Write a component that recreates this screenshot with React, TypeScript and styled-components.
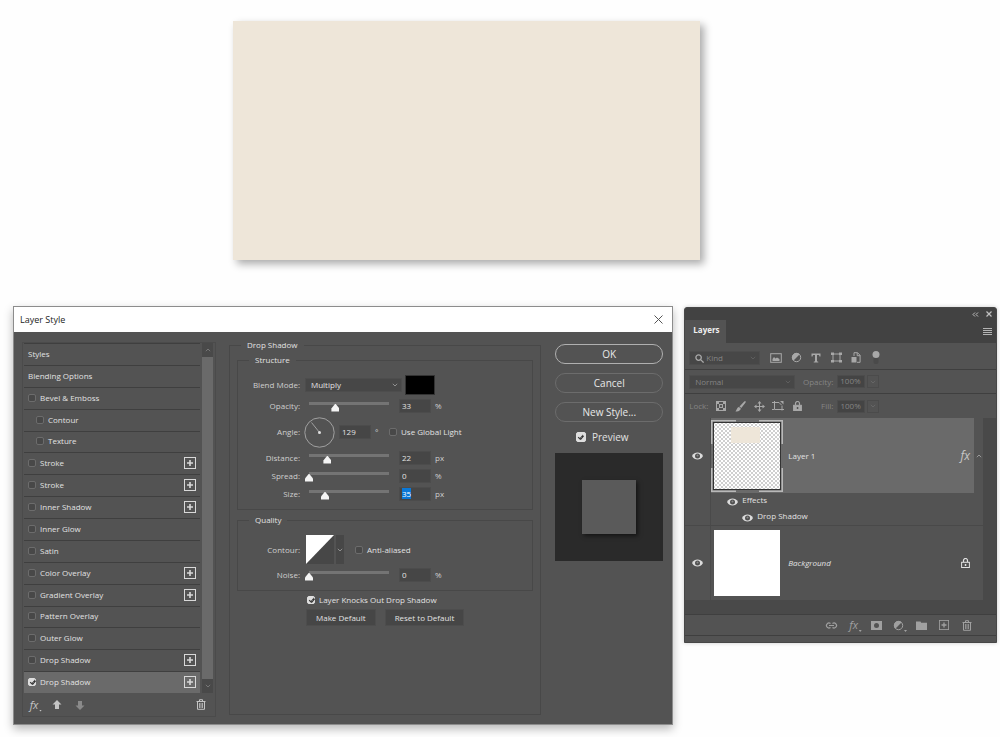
import React, { useEffect, useRef } from "react";
import styled, { createGlobalStyle, css } from "styled-components";

const GlobalStyle = createGlobalStyle`
  * { box-sizing: border-box; }
  body {
    margin: 0;
    background: #fefefe;
    font-family: "Open Sans", "Noto Sans", sans-serif;
    font-size: 8px;
    line-height: 12px;
    color: #e2e2e2;
  }
  button, input, select { font: inherit; color: inherit; margin: 0; padding: 0; }
  button { background: none; border: 0; }
  svg { display: block; flex: none; }
`;

/* ---------- page ---------- */

const Page = styled.main`
  display: flex;
  flex-direction: column;
  padding: 21px 3px 12px 13px;
`;

const Artwork = styled.div`
  width: 48%;
  max-width: 467px;
  height: 239px;
  margin-left: 220px;
  background: #eee6d9;
  box-shadow: 4px 4px 8px rgba(0, 0, 0, 0.33);
`;

const Workspace = styled.div`
  display: flex;
  align-items: flex-start;
  gap: 11px;
  margin-top: 46px;
`;

/* ---------- dialog ---------- */

const Dialog = styled.section`
  flex: 661 1 0;
  border: 1px solid #8c8c8c;
  background: #535353;
  box-shadow: 0 4px 9px rgba(0, 0, 0, 0.28);
`;

const TitleBar = styled.header`
  display: flex;
  align-items: center;
  justify-content: space-between;
  height: 25px;
  padding: 0 9px 0 6px;
  background: #fff;
  color: #1c1c1c;
`;

const Title = styled.h1`
  margin: 0;
  font-size: 9px;
  font-weight: 400;
`;

const CloseButton = styled.button`
  color: #555;
`;

const DialogBody = styled.div`
  display: flex;
  align-items: flex-start;
  padding: 7px 9px 7px 8px;
`;

const Sidebar = styled.div`
  width: 194px;
  margin: 3px 13px 0 0;
  border: 1px solid #4b4b4b;
`;

const ListArea = styled.div`
  display: flex;
  gap: 2px;
  height: 350px;
  padding: 0 2px 0 1px;
`;

const StyleList = styled.ul`
  flex: 1;
  display: flex;
  flex-direction: column;
  margin: 0;
  padding: 0;
  list-style: none;
`;

const StyleItem = styled.li<{ $selected?: boolean; $indent: number }>`
  flex: 1;
  display: flex;
  align-items: center;
  justify-content: space-between;
  min-height: 0;
  padding: 0 4px 1px ${(p) => p.$indent}px;
  border-top: 1px solid #3f3f3f;
  ${(p) => p.$selected && css`background: #6a6a6a;`}
`;

const ScrollBar = styled.div`
  display: flex;
  flex-direction: column;
  width: 11px;
  background: #494949;
`;

const ScrollButton = styled.button`
  display: grid;
  place-items: center;
  width: 11px;
  height: 14px;
  color: #777;
`;

const ScrollThumb = styled.div`
  flex: 1;
  background: #6a6a6a;
`;

const SidebarTools = styled.div`
  display: flex;
  align-items: center;
  gap: 9px;
  height: 23px;
  padding: 0 7px 0 4px;
  color: #c4c4c4;
`;

const ToolButton = styled.button<{ $dim?: boolean; $push?: boolean; $menu?: boolean }>`
  display: grid;
  place-items: center;
  position: relative;
  width: 14px;
  height: 14px;
  ${(p) => p.$dim && css`color: #8a8a8a;`}
  ${(p) => p.$push && css`margin-left: auto;`}
  ${(p) =>
    p.$menu &&
    css`
      &::after {
        content: "";
        position: absolute;
        right: -1px;
        bottom: 0;
        width: 3px;
        height: 2px;
        background: currentColor;
        clip-path: polygon(0 0, 100% 0, 50% 100%);
      }
    `}
`;

const PlusButton = styled.button`
  width: 12px;
  height: 12px;
  color: #d8d8d8;
`;

const CheckLabel = styled.label<{ $large?: boolean }>`
  display: flex;
  align-items: center;
  gap: ${(p) => (p.$large ? 6 : 4)}px;
  ${(p) => p.$large && css`font-size: 10px;`}
`;

const CheckBox = styled.input.attrs({ type: "checkbox" })<{ $large?: boolean }>`
  appearance: none;
  display: grid;
  place-items: center;
  flex: none;
  width: ${(p) => (p.$large ? 10 : 8)}px;
  height: ${(p) => (p.$large ? 10 : 8)}px;
  border: 1px solid #6c6c6c;
  border-radius: 2px;
  background: #484848;
  &:checked { background: #dedede; border-color: #dedede; }
  &:checked::before {
    content: "";
    box-sizing: content-box;
    width: 2px;
    height: 4px;
    margin-bottom: 1px;
    border: solid #333;
    border-width: 0 1px 1px 0;
    box-shadow: 1px 0 0 #333;
    rotate: 40deg;
  }
`;

const Group = styled.fieldset`
  min-width: 0;
  margin: 0;
  padding: 0;
  border: 1px solid #484848;
`;

const OuterGroup = styled(Group)`
  flex: 1;
  min-height: 376px;
  padding: 3px 7px 0;
`;

const InnerGroup = styled(Group)`
  display: block;
  & + & { margin-top: 4px; }
`;

const Legend = styled.legend<{ $outer?: boolean }>`
  margin-left: ${(p) => (p.$outer ? 4 : 11)}px;
  padding: 0 6px;
`;

const Rows = styled.div`
  display: flex;
  flex-direction: column;
  gap: 4px;
  padding: 9px 0 8px;
`;

const Row = styled.div<{ $height: number }>`
  display: flex;
  align-items: center;
  height: ${(p) => p.$height}px;
`;

const RowLabel = styled.label`
  width: 62px;
  margin-right: 5px;
  text-align: right;
  color: #cfcfcf;
`;

const SelectBox = styled.div<{ $width: number; $icon?: boolean }>`
  display: flex;
  align-items: center;
  position: relative;
  width: ${(p) => p.$width}px;
  height: 14px;
  background: #474747;
  border: 1px solid #4d4d4d;
  & > select {
    appearance: none;
    width: 100%;
    height: 12px;
    line-height: 12px;
    padding-left: ${(p) => (p.$icon ? 16 : 5)}px;
    border: 0;
    background: transparent;
  }
`;

const SelectChevron = styled.span<{ $dim?: boolean }>`
  position: absolute;
  right: 3px;
  top: 4px;
  color: ${(p) => (p.$dim ? "#5e5e5e" : "#909090")};
  pointer-events: none;
`;

const SelectGlyph = styled.span`
  position: absolute;
  left: 5px;
  top: 2px;
  color: #a8a8a8;
  pointer-events: none;
`;

const Swatch = styled.button`
  width: 30px;
  height: 20px;
  margin-left: 3px;
  background: #000;
  border: 1px solid #333;
`;

const Slider = styled.input.attrs({ type: "range" })`
  appearance: none;
  width: 88px;
  height: 14px;
  margin-right: 6px;
  background: transparent;
  &::-webkit-slider-runnable-track {
    height: 9px;
    background: linear-gradient(#747474, #747474) 4px 0 / calc(100% - 8px) 3px no-repeat;
  }
  &::-webkit-slider-thumb {
    appearance: none;
    width: 8px;
    height: 8px;
    margin-top: 2px;
    background: #f4f4f4;
    clip-path: polygon(50% 0, 100% 62%, 100% 100%, 0 100%, 0 62%);
  }
`;

const NumberField = styled.input.attrs({ type: "text" })`
  width: 32px;
  height: 14px;
  padding: 0 0 2px 2px;
  margin-right: 4px;
  border: 1px solid #4c4c4c;
  background: #464646;
  &:focus { outline: none; caret-color: transparent; }
  &::selection { background: #0a78d7; color: #fff; }
`;

const Unit = styled.span`
  color: #cfcfcf;
`;

const Dial = styled.div`
  margin: 0 4px 0 -1px;
`;

const Degree = styled.span`
  width: 14px;
  color: #cfcfcf;
`;

const ContourPicker = styled.div`
  display: flex;
  gap: 2px;
  margin: 0 11px 0 1px;
`;

const ContourButton = styled.button<{ $width: number }>`
  display: grid;
  place-items: center;
  width: ${(p) => p.$width}px;
  height: 29px;
  background: #474747;
  color: #909090;
`;

const Footer = styled.div`
  display: flex;
  flex-direction: column;
  gap: 3px;
  padding: 3px 0 0 70px;
`;

const ButtonRow = styled.div`
  display: flex;
  gap: 9px;
  margin-left: -1px;
`;

const SmallButton = styled.button`
  height: 17px;
  padding: 0 9px;
  background: #464646;
  border: 1px solid #4d4d4d;
`;

const Actions = styled.aside`
  display: flex;
  flex-direction: column;
  gap: 9px;
  width: 108px;
  margin: 5px 0 0 14px;
`;

const PillButton = styled.button<{ $primary?: boolean }>`
  height: 20px;
  border: 1px solid ${(p) => (p.$primary ? "#b0b0b0" : "#6c6c6c")};
  border-radius: 10px;
  font-size: 10px;
  color: #e8e8e8;
`;

const PreviewToggle = styled.div`
  display: flex;
  justify-content: center;
  padding: 0 14px 1px 0;
`;

const PreviewBox = styled.div`
  display: grid;
  place-items: center;
  height: 108px;
  background: #2a2a2a;
`;

const PreviewSquare = styled.div`
  width: 54px;
  height: 54px;
  background: #5a5a5a;
  box-shadow: 2px 2px 4px rgba(0, 0, 0, 0.5);
`;

/* ---------- layers panel ---------- */

const Panel = styled.section`
  flex: 312 1 0;
  margin-top: 1px;
  border: 1px solid #474747;
  border-radius: 3px 3px 0 0;
  background: #535353;
  box-shadow: 0 0 4px rgba(0, 0, 0, 0.2);
  overflow: hidden;
`;

const PanelTop = styled.div`
  display: flex;
  align-items: center;
  justify-content: flex-end;
  gap: 7px;
  height: 12px;
  padding-right: 4px;
  background: #424242;
  color: #c0c0c0;
`;

const TabBar = styled.div`
  display: flex;
  align-items: center;
  justify-content: space-between;
  height: 23px;
  padding-right: 4px;
  background: #424242;
  color: #b4b4b4;
`;

const Tab = styled.button`
  height: 23px;
  padding: 0 6px 3px 8px;
  background: #535353;
  font-weight: 700;
  color: #f0f0f0;
`;

const PanelRow = styled.div<{ $height: number; $line?: boolean; $top?: number }>`
  display: flex;
  align-items: center;
  height: ${(p) => p.$height}px;
  padding: ${(p) => p.$top ?? 0}px 4px 0;
  color: #858585;
  ${(p) => p.$line && css`border-bottom: 1px solid #3f3f3f;`}
`;

const IconSet = styled.div<{ $gap: number; $left: number }>`
  display: flex;
  align-items: center;
  gap: ${(p) => p.$gap}px;
  margin-left: ${(p) => p.$left}px;
  color: #a8a8a8;
`;

const IconButton = styled.button`
  display: grid;
  place-items: center;
  width: 12px;
  height: 14px;
`;

const PanelLabel = styled.label<{ $width: number }>`
  width: ${(p) => p.$width}px;
  text-align: right;
  margin-right: 4px;
`;

const PanelField = styled(NumberField)`
  width: 28px;
  height: 13px;
  margin-right: 2px;
  background: #444;
`;

const PanelDrop = styled.button`
  display: grid;
  place-items: center;
  width: 12px;
  height: 13px;
  border: 1px solid #4b4b4b;
  color: #666;
`;

const LayerArea = styled.div`
  display: flex;
  height: 196px;
  background: #494949;
`;

const Layers = styled.div`
  flex: 1;
  margin-right: 13px;
`;

const LayerRow = styled.div<{ $last?: boolean }>`
  display: flex;
  height: ${(p) => (p.$last ? 76 : 75)}px;
  background: #535353;
  ${(p) => p.$last && css`border: solid #494949; border-width: 1px 0;`}
`;

const EyeCell = styled.div`
  display: grid;
  place-items: center;
  width: 26px;
  border-right: 1px solid #4a4a4a;
  color: #d6d6d6;
`;

const LayerMain = styled.div<{ $active?: boolean }>`
  flex: 1;
  display: flex;
  align-items: center;
  gap: 5px;
  padding-right: 4px;
  ${(p) => p.$active && css`background: #6a6a6a;`}
`;

const Thumb = styled.div`
  width: 72px;
  height: 72px;
`;

const LayerName = styled.span<{ $italic?: boolean }>`
  flex: 1;
  font-style: ${(p) => (p.$italic ? "italic" : "normal")};
`;

const Collapse = styled.div`
  display: grid;
  place-items: center;
  width: 9px;
  color: #999;
`;

const EffectsBlock = styled.div`
  display: flex;
  height: 32px;
  background: #535353;
`;

const EffectsGutter = styled.div`
  width: 26px;
  border-right: 1px solid #4a4a4a;
`;

const EffectLine = styled.div<{ $indent: number }>`
  display: flex;
  align-items: center;
  gap: 4px;
  height: 16px;
  padding: 0 0 3px ${(p) => p.$indent}px;
  & > svg { margin-top: 4px; }
`;

const PanelTools = styled.div`
  display: flex;
  justify-content: flex-end;
  height: 22px;
  padding-right: 22px;
  border-top: 1px solid #3f3f3f;
  border-bottom: 1px solid #3f3f3f;
  color: #a0a0a0;
`;

const PanelToolSet = styled.div`
  display: flex;
  align-items: center;
  justify-content: space-between;
  width: 150px;
`;

const Grip = styled.div`
  height: 6px;
`;

const Fx = styled.span<{ $size: number }>`
  font-size: ${(p) => p.$size}px;
  font-style: italic;
  line-height: 12px;
  color: ${(p) => (p.$size > 11 ? "#c8c8c8" : "inherit")};
`;

/* ---------- icons ---------- */

const Chevron = ({ up = false }: { up?: boolean }) => (
  <svg width="6" height="4" viewBox="0 0 6 4" fill="none" stroke="currentColor">
    <path d={up ? "M.8 3.2 3 1l2.2 2.2" : "M.8.8 3 3 5.2.8"} />
  </svg>
);

const PlusIcon = ({ size = 12 }: { size?: number }) => (
  <svg width={size} height={size} viewBox="0 0 12 12" fill="none" stroke="currentColor">
    <rect x=".5" y=".5" width="11" height="11" />
    <path d="M6 3v6M3 6h6" strokeWidth="1.6" />
  </svg>
);

const TrashIcon = () => (
  <svg width="10" height="11" viewBox="0 0 10 11" fill="none" stroke="currentColor">
    <path d="M.5 2.500h9M3.500 2V.7h3V2M1.500 3v7.300h7V3" />
    <path d="M3.500 4v5M5 4v5M6.500 4v5" strokeWidth=".8" />
  </svg>
);

const ArrowIcon = ({ down = false }: { down?: boolean }) => (
  <svg width="10" height="10" viewBox="0 0 10 10" fill="currentColor">
    <path d={down ? "M5 10 .5 5.500H3V1h4v4.500h2.500z" : "M5 0 .5 4.500H3V9h4V4.500h2.500z"} />
  </svg>
);

const EyeIcon = () => (
  <svg width="11" height="8" viewBox="0 0 11 8">
    <path d="M0 4C1.500 1.400 3.300.5 5.500.5S9.500 1.400 11 4C9.500 6.600 7.700 7.500 5.500 7.500S1.500 6.600 0 4z" fill="#dcdcdc" />
    <circle cx="5.500" cy="4" r="2.500" fill="#505050" />
    <circle cx="5.500" cy="3.600" r="1" fill="#8a8a8a" />
  </svg>
);

const HalfCircle = () => (
  <svg width="11" height="11" viewBox="0 0 11 11">
    <circle cx="5.500" cy="5.500" r="4.200" fill="none" stroke="currentColor" />
    <path d="M2.300 8.700A4.500 4.500 0 0 1 8.700 2.300z" fill="currentColor" />
  </svg>
);

const ImageIcon = () => (
  <svg width="12" height="10" viewBox="0 0 12 10" fill="none" stroke="currentColor">
    <rect x=".7" y=".7" width="10.600" height="8.600" />
    <path d="M2.500 8V6l1.500-2 1.500 1.500L7 4.500 9.500 6v2z" fill="currentColor" stroke="none" />
  </svg>
);

const TypeIcon = () => (
  <svg width="10" height="10" viewBox="0 0 10 10" fill="currentColor">
    <path d="M.5.5h9v3h-1L8 2H6v6.300l1.300.4v.8H2.700v-.8L4 8.300V2H2l-.5 1.500h-1z" />
  </svg>
);

const ShapeIcon = () => (
  <svg width="11" height="11" viewBox="0 0 11 11" fill="none" stroke="currentColor">
    <path d="M2 2h7v7H2z" />
    <path d="M0 .5h3v2.500H0zM8 .5h3v2.500H8zM0 8h3v2.500H0zM8 8h3v2.500H8z" fill="currentColor" stroke="none" />
  </svg>
);

const SmartIcon = () => (
  <svg width="10" height="11" viewBox="0 0 10 11" fill="none" stroke="currentColor">
    <path d="M3 4V.7h3.500l2.600 2.600v7H6M6.200.7v3h3" />
    <rect x=".5" y="5" width="5" height="5.500" fill="currentColor" stroke="none" />
  </svg>
);

const ToggleIcon = () => (
  <svg width="8" height="14" viewBox="0 0 8 14">
    <rect x="1.500" y="2" width="5" height="11" rx="2" fill="#4a4a4a" />
    <circle cx="4" cy="3.500" r="3.500" fill="#a8a8a8" />
  </svg>
);

const SearchIcon = () => (
  <svg width="9" height="9" viewBox="0 0 9 9" fill="none" stroke="currentColor" strokeWidth="1.300">
    <circle cx="3.600" cy="3.600" r="2.700" />
    <path d="m5.600 5.600 3 3" />
  </svg>
);

const CheckerIcon = () => (
  <svg width="10" height="10" viewBox="0 0 10 10">
    <rect x=".5" y=".5" width="9" height="9" fill="none" stroke="currentColor" />
    <path d="M1 1h2v2H1zM7 1h2v2H7zM3 3h4v4H3zM1 7h2v2H1zM7 7h2v2H7z" fill="currentColor" />
    <path d="M4 4h2v2H4z" fill="#5a5a5a" />
  </svg>
);

const BrushIcon = () => (
  <svg width="11" height="11" viewBox="0 0 11 11" fill="currentColor">
    <path d="M10.500.3c.5.400.3 1-.1 1.500L6.300 7 4.500 5.500 9.200.6c.5-.4.9-.6 1.300-.3zM4 6l1.800 1.600C5.500 9.800 3 11 .3 10.300 2 9.500 1.500 6.600 4 6z" />
  </svg>
);

const MoveIcon = () => (
  <svg width="11" height="11" viewBox="0 0 11 11">
    <path d="M5.500 2v7M2 5.500h7" stroke="currentColor" fill="none" />
    <path d="M5.500 0 7.500 2.500h-4zM5.500 11l2-2.500h-4zM0 5.500l2.500-2v4zM11 5.500l-2.500-2v4z" fill="currentColor" />
  </svg>
);

const ArtboardIcon = () => (
  <svg width="12" height="10" viewBox="0 0 12 10" fill="none" stroke="currentColor">
    <path d="M0 1.500h7M2.500 0v8.500H12M10 9.500V5M0 8.500h2M7 1.500l3 3" />
    <path d="M8 0h3.500v3.500z" fill="currentColor" stroke="none" />
  </svg>
);

const LockIcon = ({ outline = false }: { outline?: boolean }) => (
  <svg width="9" height="10" viewBox="0 0 9 10" fill="none" stroke="currentColor">
    <path d="M2.500 4V2.500a2 2 0 0 1 4 0V4" strokeWidth="1.200" />
    <rect x=".6" y="4.300" width="7.800" height="5.200" fill={outline ? "none" : "currentColor"} />
    <rect x="3.800" y="6" width="1.500" height="2" fill={outline ? "currentColor" : "#535353"} stroke="none" />
  </svg>
);

const LinkIcon = () => (
  <svg width="13" height="7" viewBox="0 0 13 7" fill="none" stroke="currentColor" strokeWidth="1.200">
    <path d="M5.500 5.500A2.500 2.500 0 1 1 5.500 1.500M7.500 1.500a2.500 2.500 0 1 1 0 4M4 3.500h5" />
  </svg>
);

const MaskIcon = () => (
  <svg width="11" height="9" viewBox="0 0 11 9">
    <path fillRule="evenodd" d="M0 0h11v9H0zM5.500 2a2.500 2.500 0 1 0 0 5 2.500 2.500 0 0 0 0-5z" fill="currentColor" />
  </svg>
);

const FolderIcon = () => (
  <svg width="11" height="9" viewBox="0 0 11 9" fill="currentColor">
    <path d="M0 .5h4.500l.7 1.300H11V9H0z" />
  </svg>
);

const LayerThumb = ({ filled = false }: { filled?: boolean }) => (
  <svg width="72" height="72" viewBox="0 0 72 72">
    <defs>
      <pattern id="transparency" width="4" height="4" patternUnits="userSpaceOnUse">
        <rect width="4" height="4" fill="#fff" />
        <path d="M0 0h2v2H0zM2 2h2v2H2z" fill="#cfcfcf" />
      </pattern>
    </defs>
    {filled ? (
      <rect x="3" y="3" width="66" height="66" fill="#fff" />
    ) : (
      <>
        <path d="M.5 24V.5H25M48 .5h23.500V24M71.500 48v23.500H48M25 71.500H.5V48" fill="none" stroke="#b8b8b8" strokeWidth="2" />
        <rect x="2.500" y="2.500" width="67" height="67" fill="url(#transparency)" stroke="#333" />
        <rect x="20" y="7" width="29" height="16" fill="#eee6d9" />
      </>
    )}
  </svg>
);

/* ---------- dialog content ---------- */

type Effect = { name: string; plus?: boolean; nested?: boolean; on?: boolean };

const effects: Effect[] = [
  { name: "Bevel & Emboss" },
  { name: "Contour", nested: true },
  { name: "Texture", nested: true },
  { name: "Stroke", plus: true },
  { name: "Stroke", plus: true },
  { name: "Inner Shadow", plus: true },
  { name: "Inner Glow" },
  { name: "Satin" },
  { name: "Color Overlay", plus: true },
  { name: "Gradient Overlay", plus: true },
  { name: "Pattern Overlay" },
  { name: "Outer Glow" },
  { name: "Drop Shadow", plus: true },
  { name: "Drop Shadow", plus: true, on: true },
];

type SliderRowProps = { label: string; value: string; unit: string; percent: number; focused?: boolean };

const SliderRow = ({ label, value, unit, percent, focused }: SliderRowProps) => {
  const field = useRef<HTMLInputElement>(null);
  useEffect(() => {
    if (focused && field.current) {
      field.current.focus();
      field.current.select();
    }
  }, [focused]);
  const id = `field-${label.toLowerCase()}`;
  return (
    <Row $height={14}>
      <RowLabel htmlFor={id}>{label}:</RowLabel>
      <Slider defaultValue={percent} aria-label={label} />
      <NumberField ref={field} id={id} defaultValue={value} />
      <Unit>{unit}</Unit>
    </Row>
  );
};

const StylesSidebar = () => (
  <Sidebar>
    <ListArea>
      <StyleList>
        <StyleItem $indent={4}>Styles</StyleItem>
        <StyleItem $indent={4}>Blending Options</StyleItem>
        {effects.map((e, i) => (
          <StyleItem key={i} $indent={e.nested ? 12 : 4} $selected={e.on}>
            <CheckLabel>
              <CheckBox defaultChecked={e.on} />
              {e.name}
            </CheckLabel>
            {e.plus && (
              <PlusButton aria-label={`Add ${e.name}`}>
                <PlusIcon />
              </PlusButton>
            )}
          </StyleItem>
        ))}
      </StyleList>
      <ScrollBar>
        <ScrollButton aria-label="Scroll up"><Chevron up /></ScrollButton>
        <ScrollThumb />
        <ScrollButton aria-label="Scroll down"><Chevron /></ScrollButton>
      </ScrollBar>
    </ListArea>
    <SidebarTools>
      <ToolButton aria-label="Effects menu" $menu><Fx $size={11}>fx</Fx></ToolButton>
      <ToolButton aria-label="Move up"><ArrowIcon /></ToolButton>
      <ToolButton aria-label="Move down" $dim><ArrowIcon down /></ToolButton>
      <ToolButton aria-label="Delete" $push><TrashIcon /></ToolButton>
    </SidebarTools>
  </Sidebar>
);

const DropShadowSettings = () => (
  <OuterGroup>
    <Legend $outer>Drop Shadow</Legend>
    <InnerGroup>
      <Legend>Structure</Legend>
      <Rows>
        <Row $height={20}>
          <RowLabel htmlFor="blend">Blend Mode:</RowLabel>
          <SelectBox $width={97}>
            <select id="blend"><option>Multiply</option></select>
            <SelectChevron><Chevron /></SelectChevron>
          </SelectBox>
          <Swatch aria-label="Shadow color" />
        </Row>
        <SliderRow label="Opacity" value="33" unit="%" percent={33} />
        <Row $height={30}>
          <RowLabel htmlFor="angle">Angle:</RowLabel>
          <Dial>
            <svg width="31" height="31" viewBox="0 0 31 31" fill="none" stroke="#a0a0a0">
              <circle cx="15.500" cy="15.500" r="14.700" />
              <path d="m15.500 15.500-8-10" />
              <circle cx="15.500" cy="15.500" r="1.500" fill="#e0e0e0" stroke="none" />
            </svg>
          </Dial>
          <NumberField id="angle" defaultValue="129" />
          <Degree>°</Degree>
          <CheckLabel><CheckBox />Use Global Light</CheckLabel>
        </Row>
        <SliderRow label="Distance" value="22" unit="px" percent={23} />
        <SliderRow label="Spread" value="0" unit="%" percent={0} />
        <SliderRow label="Size" value="35" unit="px" percent={20} focused />
      </Rows>
    </InnerGroup>
    <InnerGroup>
      <Legend>Quality</Legend>
      <Rows>
        <Row $height={29}>
          <RowLabel as="span">Contour:</RowLabel>
          <ContourPicker>
            <ContourButton $width={28} aria-label="Edit contour">
              <svg width="28" height="29" viewBox="0 0 28 29"><path d="M0 0h28L0 29z" fill="#fff" /></svg>
            </ContourButton>
            <ContourButton $width={8} aria-label="Choose contour"><Chevron /></ContourButton>
          </ContourPicker>
          <CheckLabel><CheckBox />Anti-aliased</CheckLabel>
        </Row>
        <SliderRow label="Noise" value="0" unit="%" percent={0} />
      </Rows>
    </InnerGroup>
    <Footer>
      <CheckLabel><CheckBox defaultChecked />Layer Knocks Out Drop Shadow</CheckLabel>
      <ButtonRow>
        <SmallButton>Make Default</SmallButton>
        <SmallButton>Reset to Default</SmallButton>
      </ButtonRow>
    </Footer>
  </OuterGroup>
);

const LayerStyleDialog = () => (
  <Dialog>
    <TitleBar>
      <Title>Layer Style</Title>
      <CloseButton aria-label="Close">
        <svg width="9" height="9" viewBox="0 0 9 9" stroke="currentColor"><path d="m.5.5 8 8M8.500.5l-8 8" /></svg>
      </CloseButton>
    </TitleBar>
    <DialogBody>
      <StylesSidebar />
      <DropShadowSettings />
      <Actions>
        <PillButton $primary>OK</PillButton>
        <PillButton>Cancel</PillButton>
        <PillButton>New Style...</PillButton>
        <PreviewToggle>
          <CheckLabel $large><CheckBox $large defaultChecked />Preview</CheckLabel>
        </PreviewToggle>
        <PreviewBox><PreviewSquare /></PreviewBox>
      </Actions>
    </DialogBody>
  </Dialog>
);

/* ---------- layers panel content ---------- */

const LayersPanel = () => (
  <Panel>
    <PanelTop>
      <svg width="7" height="5" viewBox="0 0 7 5" fill="none" stroke="currentColor"><path d="M3 .5 1 2.500l2 2M6 .5l-2 2 2 2" /></svg>
      <svg width="6" height="6" viewBox="0 0 6 6" stroke="currentColor" strokeWidth="1.200"><path d="m.5.5 5 5M5.500.5l-5 5" /></svg>
    </PanelTop>
    <TabBar>
      <Tab>Layers</Tab>
      <svg width="9" height="7" viewBox="0 0 9 7" stroke="currentColor"><path d="M0 .5h9M0 2.500h9M0 4.500h9M0 6.500h9" /></svg>
    </TabBar>
    <PanelRow $height={27} $top={3} $line>
      <SelectBox $width={71} $icon>
        <SelectGlyph><SearchIcon /></SelectGlyph>
        <select aria-label="Filter kind"><option>Kind</option></select>
        <SelectChevron $dim><Chevron /></SelectChevron>
      </SelectBox>
      <IconSet $gap={8} $left={10}>
        <IconButton aria-label="Pixel layers"><ImageIcon /></IconButton>
        <IconButton aria-label="Adjustment layers"><HalfCircle /></IconButton>
        <IconButton aria-label="Type layers"><TypeIcon /></IconButton>
        <IconButton aria-label="Shape layers"><ShapeIcon /></IconButton>
        <IconButton aria-label="Smart objects"><SmartIcon /></IconButton>
        <IconButton aria-label="Toggle filter"><ToggleIcon /></IconButton>
      </IconSet>
    </PanelRow>
    <PanelRow $height={24} $line>
      <SelectBox $width={106}>
        <select aria-label="Blend mode"><option>Normal</option></select>
        <SelectChevron $dim><Chevron /></SelectChevron>
      </SelectBox>
      <PanelLabel $width={38} htmlFor="layer-opacity">Opacity:</PanelLabel>
      <PanelField id="layer-opacity" defaultValue="100%" />
      <PanelDrop aria-label="Opacity slider"><Chevron /></PanelDrop>
    </PanelRow>
    <PanelRow $height={24}>
      Lock:
      <IconSet $gap={7} $left={7}>
        <IconButton aria-label="Lock transparency"><CheckerIcon /></IconButton>
        <IconButton aria-label="Lock pixels"><BrushIcon /></IconButton>
        <IconButton aria-label="Lock position"><MoveIcon /></IconButton>
        <IconButton aria-label="Lock artboard"><ArtboardIcon /></IconButton>
        <IconButton aria-label="Lock all"><LockIcon /></IconButton>
      </IconSet>
      <PanelLabel $width={30} htmlFor="layer-fill">Fill:</PanelLabel>
      <PanelField id="layer-fill" defaultValue="100%" />
      <PanelDrop aria-label="Fill slider"><Chevron /></PanelDrop>
    </PanelRow>
    <LayerArea>
      <Layers>
        <LayerRow>
          <EyeCell><EyeIcon /></EyeCell>
          <LayerMain $active>
            <Thumb><LayerThumb /></Thumb>
            <LayerName>Layer 1</LayerName>
            <Fx $size={12}>fx</Fx>
          </LayerMain>
          <Collapse><Chevron up /></Collapse>
        </LayerRow>
        <EffectsBlock>
          <EffectsGutter />
          <div>
            <EffectLine $indent={16}><EyeIcon />Effects</EffectLine>
            <EffectLine $indent={31}><EyeIcon />Drop Shadow</EffectLine>
          </div>
        </EffectsBlock>
        <LayerRow $last>
          <EyeCell><EyeIcon /></EyeCell>
          <LayerMain>
            <Thumb><LayerThumb filled /></Thumb>
            <LayerName $italic>Background</LayerName>
            <LockIcon outline />
          </LayerMain>
          <Collapse />
        </LayerRow>
      </Layers>
    </LayerArea>
    <PanelTools>
      <PanelToolSet>
        <ToolButton aria-label="Link layers"><LinkIcon /></ToolButton>
        <ToolButton aria-label="Add layer style" $menu><Fx $size={11}>fx</Fx></ToolButton>
        <ToolButton aria-label="Add mask"><MaskIcon /></ToolButton>
        <ToolButton aria-label="New adjustment layer" $menu><HalfCircle /></ToolButton>
        <ToolButton aria-label="New group"><FolderIcon /></ToolButton>
        <ToolButton aria-label="New layer"><PlusIcon size={10} /></ToolButton>
        <ToolButton aria-label="Delete layer"><TrashIcon /></ToolButton>
      </PanelToolSet>
    </PanelTools>
    <Grip />
  </Panel>
);

export default function App() {
  return (
    <>
      <GlobalStyle />
      <Page>
        <Artwork />
        <Workspace>
          <LayerStyleDialog />
          <LayersPanel />
        </Workspace>
      </Page>
    </>
  );
}
